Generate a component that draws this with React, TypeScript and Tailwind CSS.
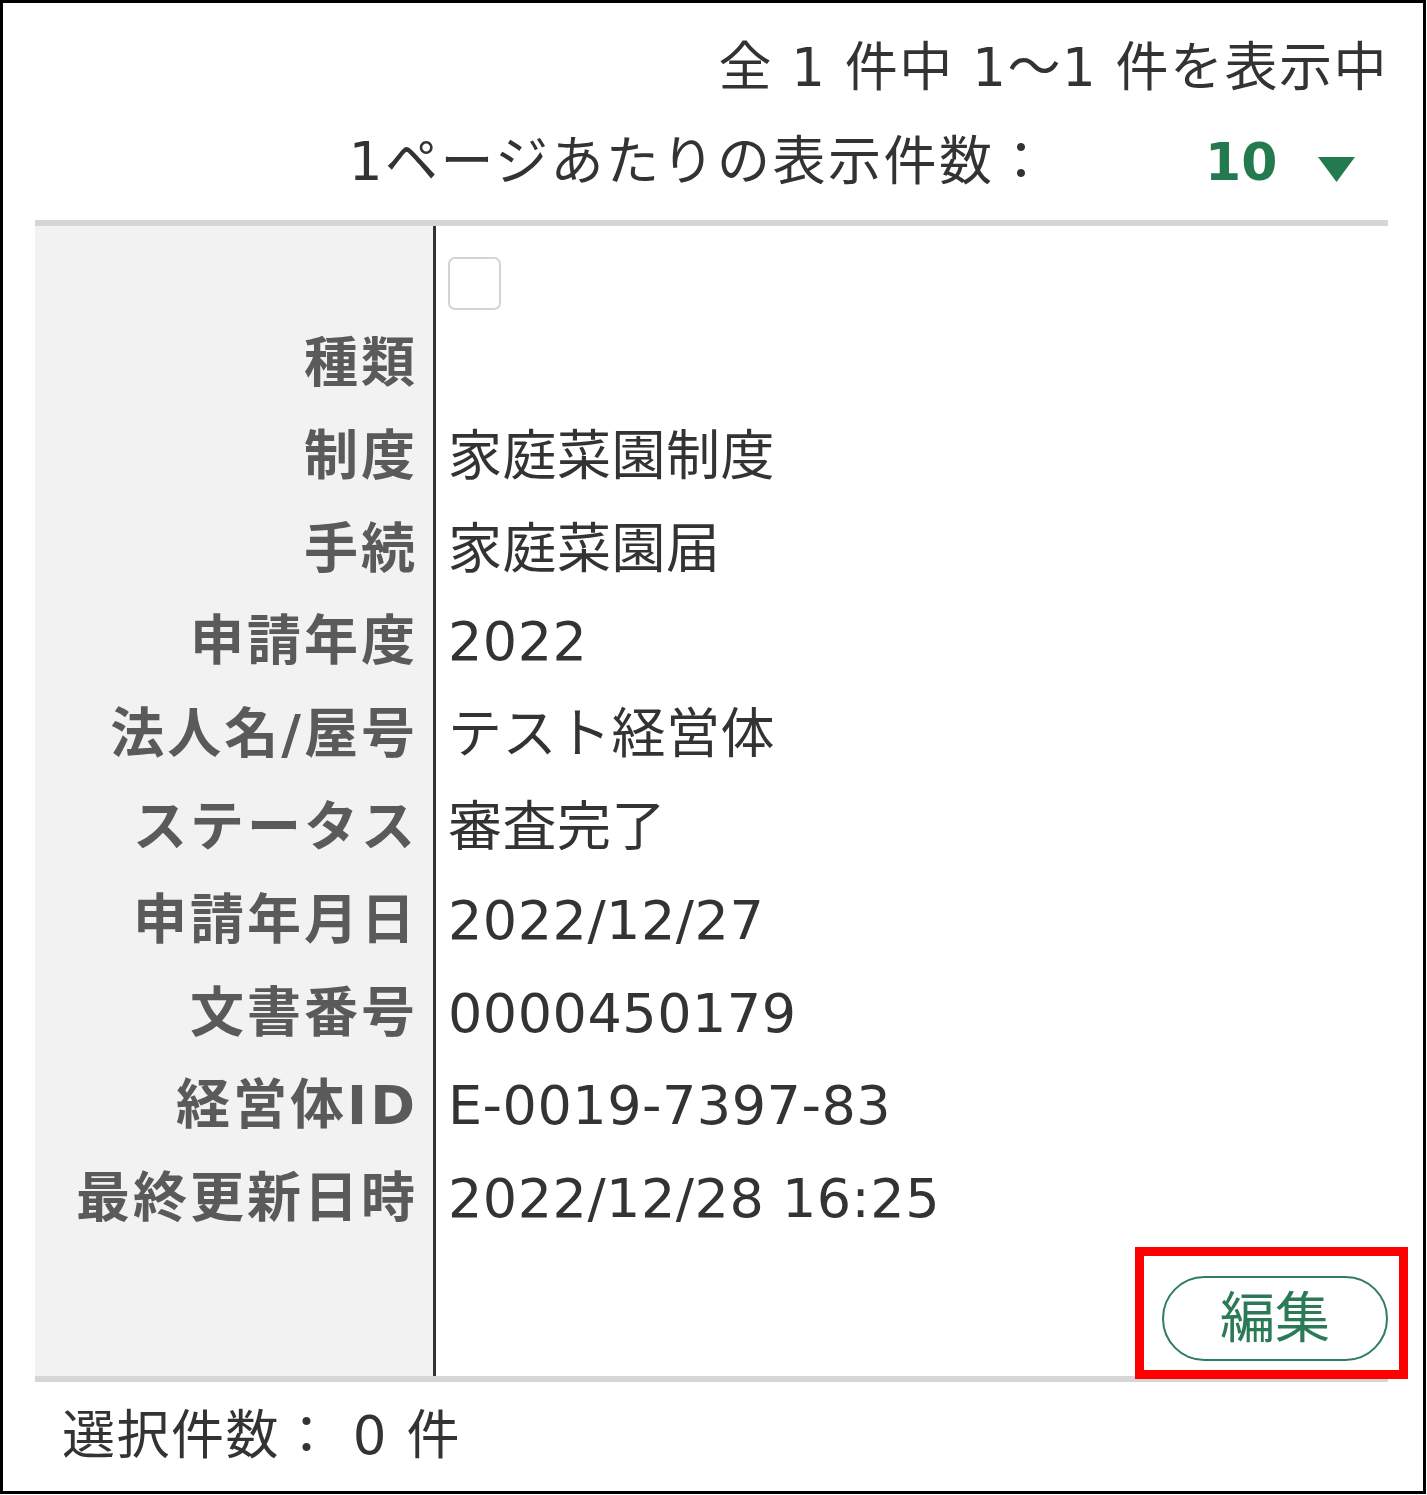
import React from "react";

const rows: [string, string][] = [
  ["種類", ""],
  ["制度", "家庭菜園制度"],
  ["手続", "家庭菜園届"],
  ["申請年度", "2022"],
  ["法人名/屋号", "テスト経営体"],
  ["ステータス", "審査完了"],
  ["申請年月日", "2022/12/27"],
  ["文書番号", "0000450179"],
  ["経営体ID", "E-0019-7397-83"],
  ["最終更新日時", "2022/12/28 16:25"],
];

export default function App() {
  return (
    <div
      className="w-[1426px] h-[1494px] border-[3px] border-black bg-white text-[#333] box-border"
      style={{ fontFamily: '"DejaVu Sans", "Noto Sans CJK JP", sans-serif' }}
    >
      <div className="pl-[32px] pr-[35px]">
        {/* header */}
        <div className="pt-[35px] text-right text-[53px] leading-[60px] tracking-[1.5px] whitespace-pre">
          全 1 件中 1～1 件を表示中
        </div>
        <div className="mt-[34px] flex items-center justify-end h-[60px]">
          <span className="text-[53px] leading-[60px] tracking-[2.5px]">1ページあたりの表示件数：</span>
          <div className="ml-[155px] w-[183px] flex items-center">
            <span className="text-[52px] leading-[60px] font-bold text-[#237a4e]">10</span>
            <svg className="ml-auto mr-[33px] mt-[14px]" width="37" height="25" viewBox="0 0 37 25">
              <polygon points="0,0 37,0 18.5,25" fill="#237a4e" />
            </svg>
          </div>
        </div>

        {/* table */}
        <div className="mt-[28px] border-t-[6px] border-b-[6px] border-[#d6d6d6]">
          <div className="flex">
            <div className="w-[401px] bg-[#f2f2f2] border-r-[3px] border-[#333] shrink-0">
              <div className="h-[88.6px]" />
              {rows.map(([label]) => (
                <div
                  key={label}
                  className="h-[92.8px] pt-[5px] flex items-center justify-end pr-[15px] text-[54px] tracking-[3px] font-bold text-[#5a5a5a] whitespace-nowrap"
                >
                  {label}
                </div>
              ))}
              <div className="h-[133.6px]" />
            </div>
            <div className="flex-1 pl-[12px]">
              <div className="h-[88.6px] pt-[31px]">
                <div className="w-[53px] h-[53px] rounded-[7px] border-[2px] border-[#d4d4d4] bg-white" />
              </div>
              {rows.map(([label, value]) => (
                <div
                  key={label}
                  className="h-[92.8px] pt-[5px] flex items-center text-[54px] tracking-[0.5px] text-[#333] whitespace-nowrap"
                >
                  {value}
                </div>
              ))}
              <div className="h-[133.6px] pt-[33.6px] flex justify-end">
                <div className="relative w-[226px] h-[85px]">
                  <button className="w-[226px] h-[85px] rounded-full border-[2px] border-[#2e7d5b] bg-white text-[#2a7a55] text-[55px] leading-none flex items-center justify-center">
                    編集
                  </button>
                  <div className="absolute left-[-27px] top-[-29px] right-[-20px] bottom-[-18px] border-[9px] border-[#ff0000] pointer-events-none" />
                </div>
              </div>
            </div>
          </div>
        </div>

        {/* footer */}
        <div className="pl-[27px] mt-[24px] text-[53px] leading-[60px] tracking-[1.5px] whitespace-pre">選択件数： 0 件</div>
      </div>
    </div>
  );
}
